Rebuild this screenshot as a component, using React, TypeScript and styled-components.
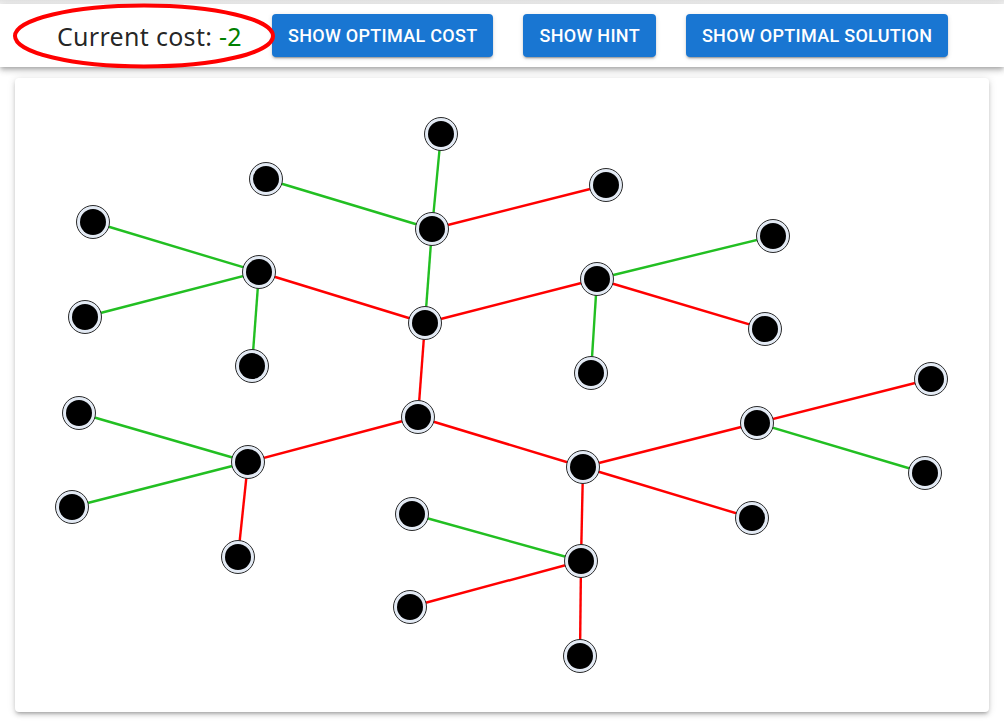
import React from 'react';
import styled, { createGlobalStyle } from 'styled-components';

const GlobalStyle = createGlobalStyle`
    html, body {
        margin: 0;
        padding: 0;
        background: #ffffff;
        font-family: Roboto, "Liberation Sans", sans-serif;
    }
`

const Page = styled.div`
    width: 1004px;
    height: 723px;
    overflow: hidden;
    background: linear-gradient(#e6e6e6, #f4f4f4 4px, #ffffff 4px);
    padding-top: 4px;
    box-sizing: border-box;
`

const TopBar = styled.header`
    position: relative;
    display: flex;
    align-items: center;
    gap: 30px;
    height: 63px;
    padding-left: 57px;
    background: #ffffff;
    box-shadow: 0 2px 4px -1px rgba(0,0,0,0.2), 0 4px 5px 0 rgba(0,0,0,0.14), 0 1px 10px 0 rgba(0,0,0,0.12);
    z-index: 1;
`

const CostLabel = styled.div`
    font-family: "Noto Sans", "Open Sans", sans-serif;
    font-size: 25px;
    letter-spacing: 0.3px;
    color: rgba(0,0,0,0.87);
    white-space: nowrap;
    padding-top: 1px;
`

const CostValue = styled.span<{ positive: boolean }>`
    color: ${(props) => (props.positive ? '#d00000' : '#008000')};
`

// red hand-drawn style ring around the cost
const Ring = styled.svg`
    position: absolute;
    left: 12px;
    top: -2px;
    overflow: visible;
    pointer-events: none;
`

const Button = styled.button`
    height: 43px;
    padding: 0 16px;
    border: none;
    border-radius: 4px;
    background: #1976d2;
    color: #ffffff;
    font-family: Roboto, sans-serif;
    font-weight: 500;
    font-size: 18px;
    letter-spacing: 0.3px;
    text-transform: uppercase;
    box-shadow: 0 3px 1px -2px rgba(0,0,0,0.2), 0 2px 2px 0 rgba(0,0,0,0.14), 0 1px 5px 0 rgba(0,0,0,0.12);
    cursor: pointer;
`

const Board = styled.main`
    margin: 11px 15px 0;
    height: 634px;
    background: #ffffff;
    border-radius: 4px;
    box-shadow: 0 3px 3px -2px rgba(0,0,0,0.2), 0 3px 4px 0 rgba(0,0,0,0.14), 0 1px 8px 0 rgba(0,0,0,0.12);
    overflow: hidden;
`

const Canvas = styled.svg`
    display: block;
`

// node positions in page coordinates
const nodes: [number, number][] = [
    [441, 134], [266, 179], [606, 185], [93, 222], [432, 229],
    [773, 236], [259, 272], [597, 279], [85, 317], [425, 323],
    [765, 329], [252, 366], [591, 373], [931, 379], [79, 413],
    [418, 417], [757, 423], [248, 462], [583, 467], [925, 473],
    [72, 507], [412, 514], [752, 518], [238, 557], [581, 561],
    [410, 607], [580, 656],
];

const G = '#22bf22';
const R = '#ff0000';

const edges: [number, number, string][] = [
    [0, 4, G], [1, 4, G], [4, 2, R], [4, 9, G],
    [3, 6, G], [8, 6, G], [6, 11, G], [6, 9, R],
    [9, 7, R], [7, 5, G], [7, 10, R], [7, 12, G],
    [9, 15, R], [14, 17, G], [20, 17, G], [17, 23, R],
    [17, 15, R], [15, 18, R], [18, 16, R], [16, 13, R],
    [16, 19, G], [18, 22, R], [18, 24, R], [21, 24, G],
    [25, 24, R], [24, 26, R],
];

const OX = 15;
const OY = 78;

const App = () => {
    const cost = -2;
    return (
        <Page>
            <GlobalStyle />
            <TopBar>
                <CostLabel>
                    Current cost: <CostValue positive={cost > 0}>{cost}</CostValue>
                </CostLabel>
                <Button>Show optimal cost</Button>
                <Button>Show hint</Button>
                <Button>Show optimal solution</Button>
                <Ring width="266" height="70">
                    <ellipse cx="132" cy="34" rx="129" ry="30.5" fill="none" stroke="#ff0000" strokeWidth="4" />
                </Ring>
            </TopBar>
            <Board>
                <Canvas width="974" height="634">
                    {edges.map(([a, b, c], i) => (
                        <line
                            key={i}
                            x1={nodes[a][0] - OX}
                            y1={nodes[a][1] - OY}
                            x2={nodes[b][0] - OX}
                            y2={nodes[b][1] - OY}
                            stroke={c}
                            strokeWidth="2.4"
                        />
                    ))}
                    {nodes.map(([x, y], i) => (
                        <g key={i}>
                            <circle cx={x - OX} cy={y - OY} r="16.5" fill="#e3eaf4" stroke="#2a2a2a" strokeWidth="1" />
                            <circle cx={x - OX} cy={y - OY} r="13" fill="#000000" />
                        </g>
                    ))}
                </Canvas>
            </Board>
        </Page>
    )
}

export default App;
